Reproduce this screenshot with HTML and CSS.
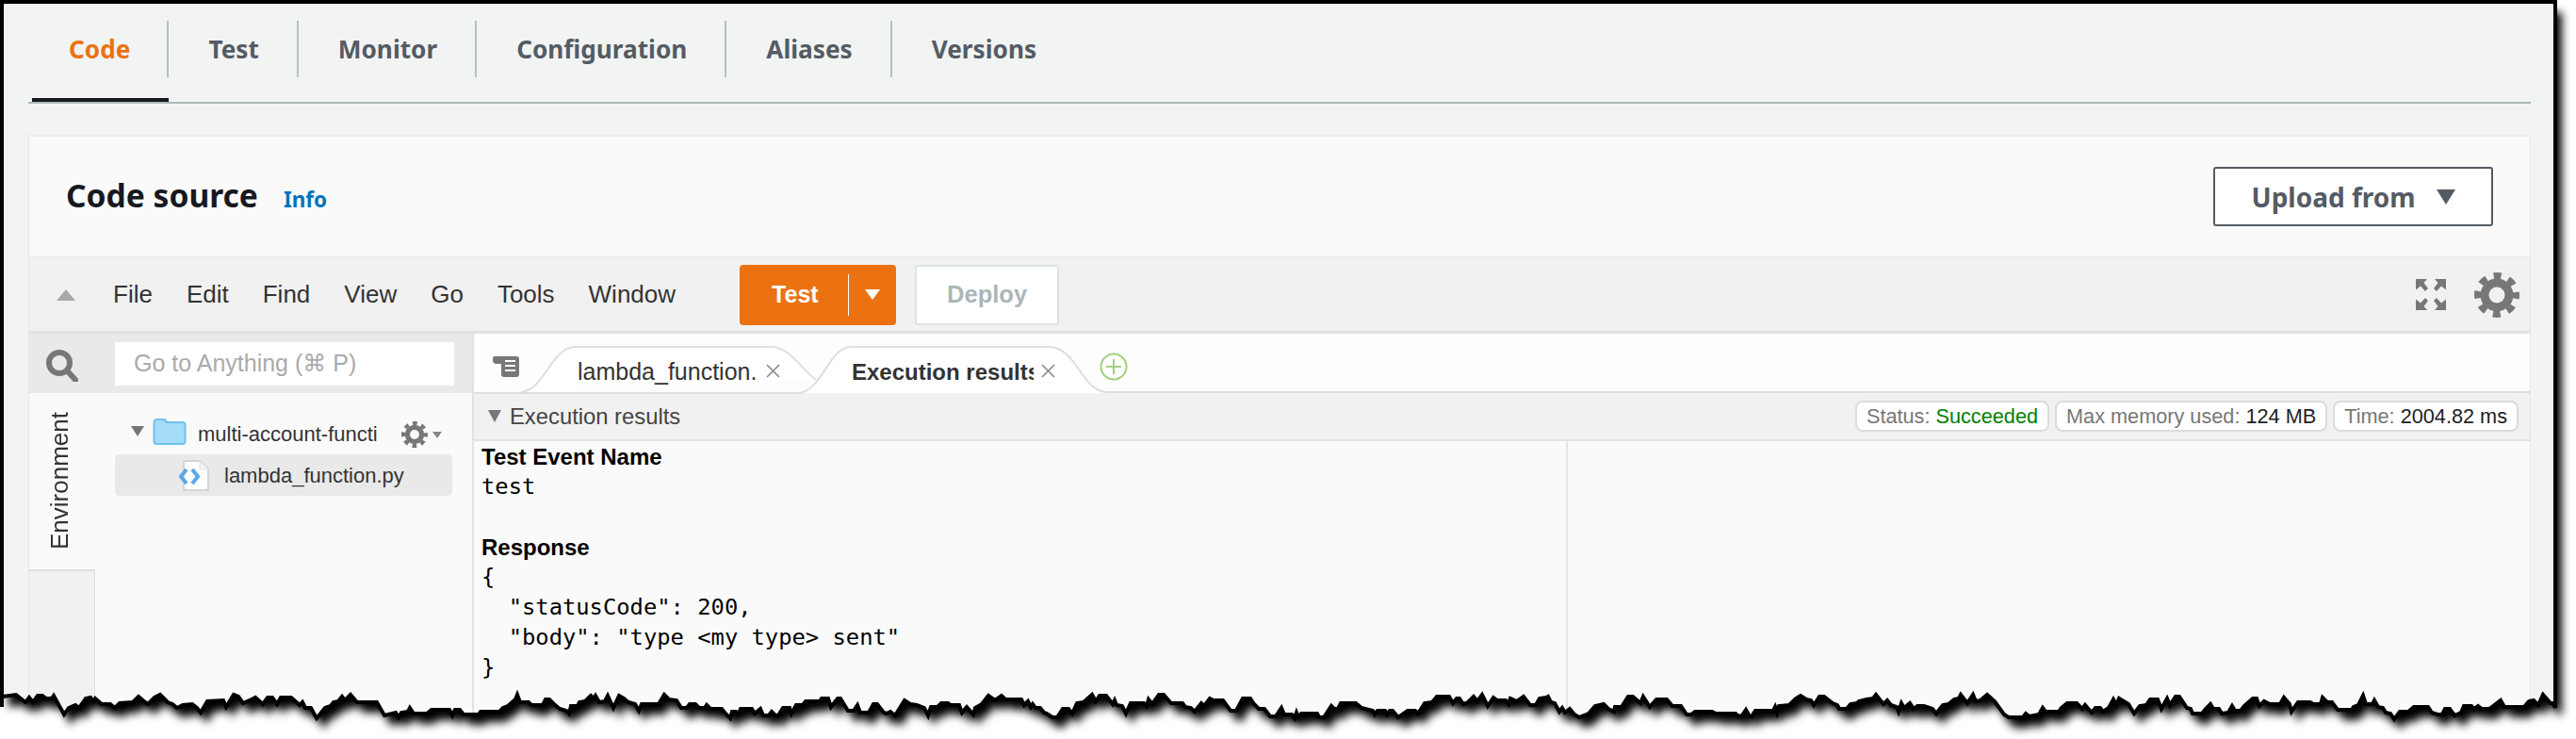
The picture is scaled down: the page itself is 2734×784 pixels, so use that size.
FILE: index.html
```html
<!DOCTYPE html>
<html lang="en">
<head>
<meta charset="utf-8">
<title>Code source</title>
<link rel="stylesheet" href="styles.css">
</head>
<body>
<svg class="defs" width="0" height="0" aria-hidden="true">
  <symbol id="gear" viewBox="-24 -24 48 48">
    <circle r="20.5" fill="none" stroke="currentColor" stroke-width="7" stroke-dasharray="8.05 8.05" stroke-dashoffset="4.02"/>
    <circle r="13" fill="none" stroke="currentColor" stroke-width="9"/>
  </symbol>
</svg>
<main class="page">
  <nav class="tabs">
    <a class="tab active"><span class="tab-label">Code</span></a>
    <a class="tab"><span class="tab-label">Test</span></a>
    <a class="tab"><span class="tab-label">Monitor</span></a>
    <a class="tab"><span class="tab-label">Configuration</span></a>
    <a class="tab"><span class="tab-label">Aliases</span></a>
    <a class="tab"><span class="tab-label last">Versions</span></a>
  </nav>
  <section class="card">
    <header class="card-head">
      <h2 class="card-title">Code source</h2>
      <a class="info">Info</a>
      <button class="upload">Upload from<span class="upload-caret"></span></button>
    </header>
    <div class="toolbar">
      <span class="collapse"></span>
      <ul class="menu">
        <li>File</li><li>Edit</li><li>Find</li><li>View</li><li>Go</li><li>Tools</li><li>Window</li>
      </ul>
      <div class="run">
        <span class="run-label">Test</span>
        <span class="run-div"></span>
        <span class="run-caret"></span>
      </div>
      <button class="deploy">Deploy</button>
      <svg class="expand" viewBox="0 0 32 33" aria-hidden="true">
        <g fill="#777">
          <path d="M0 0h12l-3.500 4 4.500 6-3 3-5-5.500-5 4z"/>
          <path d="M32 0h-12l3.500 4-4.500 6 3 3 5-5.500 5 4z"/>
          <path d="M0 33h12l-3.500-4 4.500-6-3-3-5 5.500-5-4z"/>
          <path d="M32 33h-12l3.500-4-4.500-6 3-3 5 5.500 5-4z"/>
        </g>
      </svg>
      <svg class="gear-lg" aria-hidden="true"><use href="#gear"/></svg>
    </div>
    <div class="ide">
      <aside class="side">
        <div class="search">
          <svg class="search-icon" viewBox="0 0 34 34" aria-hidden="true">
            <circle cx="14" cy="14" r="11" fill="none" stroke="#777" stroke-width="6"/>
            <path d="M22 22l9 10" stroke="#777" stroke-width="6" stroke-linecap="round"/>
          </svg>
          <div class="search-box">Go to Anything (⌘ P)</div>
        </div>
        <div class="side-body">
          <div class="env">
            <div class="env-tab"><span class="env-label">Environment</span></div>
            <div class="env-rest"></div>
          </div>
          <div class="tree">
            <div class="tree-folder">
              <span class="tree-tri"></span>
              <svg class="folder" viewBox="0 0 36 28" aria-hidden="true">
                <path d="M1.500 5V4a3 3 0 0 1 3-3h7a3 3 0 0 1 3 3h17a3 3 0 0 1 3 3v17a3 3 0 0 1-3 3h-27a3 3 0 0 1-3-3z" fill="#a5dcf7" stroke="#70c2ea" stroke-width="2"/>
              </svg>
              <span class="tree-name">multi-account-function</span>
              <svg class="gear-sm" aria-hidden="true"><use href="#gear"/></svg>
              <span class="gear-tri"></span>
            </div>
            <div class="tree-file">
              <svg class="file" viewBox="0 0 32 34" aria-hidden="true">
                <path d="M5 1h17l9 9v22H5z" fill="#fff" stroke="#d5d5d5" stroke-width="2"/>
                <path d="M22 1v9h9" fill="#f2f2f2" stroke="#e2e2e2" stroke-width="1"/>
                <path d="M8 10l-6 7.500 6 7.500M14 10l6 7.500-6 7.500" fill="none" stroke="#5aa7ea" stroke-width="4"/>
              </svg>
              <span>lambda_function.py</span>
            </div>
          </div>
        </div>
      </aside>
      <div class="editor">
        <div class="etabs">
          <svg class="etabs-shape" aria-hidden="true">
            <path d="M0 63H345" fill="none" stroke="#dedede" stroke-width="2"/>
            <path d="M50 62C75 60 82 14 108 14H315C335 14 345 35 363 49" fill="#fff" stroke="#dedede" stroke-width="2"/>
            <path d="M345 63C370 60 377 14 400 14H610C640 14 645 62 672 62H2184" fill="#fff" stroke="#dedede" stroke-width="2"/>
          </svg>
          <svg class="list-icon" viewBox="0 0 28 22" aria-hidden="true">
            <path d="M2 0h23a3 3 0 0 1 3 3v16a3 3 0 0 1-3 3H12a3 3 0 0 1-3-3V8H4a4 4 0 0 1-4-4V2a2 2 0 0 1 2-2z" fill="#777"/>
            <path d="M13 5h11M13 10h11M13 15h11" stroke="#fff" stroke-width="2"/>
          </svg>
          <span class="etab first">lambda_function.py</span>
          <svg class="close first-close" viewBox="0 0 15 15" aria-hidden="true"><path d="M1 1l13 13M14 1L1 14" stroke="#888" stroke-width="1.600"/></svg>
          <span class="etab second">Execution results</span>
          <svg class="close" viewBox="0 0 15 15" aria-hidden="true"><path d="M1 1l13 13M14 1L1 14" stroke="#888" stroke-width="1.600"/></svg>
          <svg class="plus" viewBox="0 0 30 30" aria-hidden="true">
            <circle cx="15" cy="15" r="13.500" fill="#fff" stroke="#a0d080" stroke-width="2"/>
            <path d="M15 7v16M7 15h16" stroke="#a0d080" stroke-width="2"/>
          </svg>
        </div>
        <div class="exec-bar">
          <span class="exec-tri"></span>
          <span class="exec-title">Execution results</span>
          <div class="pills">
            <span class="pill">Status: <b class="ok">Succeeded</b></span>
            <span class="pill">Max memory used: <b>124 MB</b></span>
            <span class="pill">Time: <b>2004.82 ms</b></span>
          </div>
        </div>
        <div class="panes">
          <div class="pane-left">
            <div class="out-head">Test Event Name</div>
            <pre class="out-code">test

</pre>
            <div class="out-head">Response</div>
            <pre class="out-code">{
  "statusCode": 200,
  "body": "type &lt;my type&gt; sent"
}</pre>
          </div>
        </div>
      </div>
    </div>
  </section>
</main>
<svg class="frame" viewBox="0 0 2734 784" aria-hidden="true">
  <defs>
    <path id="paper" d="M2 2V750V739L3 739 17 737 27 745 31 740 35 745 40 738 45 738 49 741 55 741 57 738 68 758 73 751 80 748 84 751 91 741 96 740 99 744 101 741 108 747 117 747 122 751 127 746 141 745 147 739 154 745 157 747 164 740 170 737 178 745 183 747 188 751 194 748 204 747 209 751 213 756 220 744 237 743 240 750 248 737 253 739 258 746 267 742 271 740 279 747 284 740 289 740 294 747 298 740 309 740 318 748 321 745 324 751 330 751 336 762 345 751 351 749 354 745 359 744 363 739 366 743 372 737 379 745 400 745 408 759 420 756 423 761 426 756 433 755 435 751 439 757 453 757 458 753 477 753 480 759 483 753 488 753 492 758 508 758 510 755 530 755 534 751 539 749 547 742 549 737 552 745 561 745 564 748 576 748 579 742 583 742 588 747 594 752 601 754 604 757 606 749 613 749 615 745 621 744 627 738 630 741 632 738 636 745 642 744 645 738 651 751 657 738 662 741 667 745 674 747 678 754 681 747 699 747 705 737 710 742 718 743 723 751 729 751 732 747 738 747 742 751 748 751 750 748 754 752 766 752 770 757 775 762 777 755 781 755 784 757 786 752 798 752 801 757 807 752 810 759 816 759 819 755 823 759 826 759 831 751 838 751 840 757 845 748 852 748 855 744 870 744 872 741 879 741 882 750 889 741 892 741 900 754 906 754 910 748 913 756 922 756 927 747 931 747 938 756 941 757 945 755 950 759 960 743 966 747 973 748 981 751 985 759 988 750 995 750 999 746 1006 746 1009 748 1018 748 1021 756 1026 750 1033 758 1035 751 1042 747 1049 738 1056 743 1063 738 1067 742 1084 742 1087 748 1091 744 1094 750 1096 747 1099 751 1104 751 1108 756 1111 757 1117 761 1122 761 1128 752 1134 752 1138 757 1143 746 1150 745 1159 737 1163 744 1167 738 1174 738 1181 747 1183 743 1185 748 1191 749 1195 757 1200 746 1214 746 1217 749 1219 742 1223 747 1230 737 1235 737 1243 746 1255 746 1258 750 1264 751 1268 755 1275 746 1278 749 1284 741 1288 743 1298 743 1306 754 1312 754 1319 741 1327 741 1331 747 1336 752 1342 752 1348 760 1354 760 1360 751 1363 758 1371 758 1374 762 1376 756 1378 761 1381 757 1398 757 1400 761 1405 761 1413 749 1416 752 1420 752 1423 746 1439 746 1445 751 1457 754 1459 758 1462 754 1470 754 1472 758 1475 754 1478 754 1484 761 1494 754 1502 754 1505 757 1512 746 1520 745 1525 739 1538 739 1542 746 1546 741 1549 741 1553 747 1558 745 1564 739 1568 744 1573 737 1579 749 1585 740 1589 743 1598 743 1601 747 1603 741 1610 744 1617 739 1624 748 1630 748 1634 741 1641 740 1643 739 1646 745 1650 746 1655 755 1658 751 1661 756 1666 752 1671 758 1676 761 1686 757 1693 749 1702 747 1707 752 1713 755 1714 750 1721 750 1728 739 1733 739 1741 746 1744 739 1751 750 1758 742 1769 742 1775 749 1784 749 1790 758 1795 758 1799 755 1817 755 1821 757 1842 757 1845 760 1849 759 1853 753 1857 760 1859 760 1863 754 1882 754 1884 750 1886 756 1888 749 1899 748 1906 741 1911 738 1917 742 1922 743 1925 748 1931 739 1936 739 1945 746 1950 748 1952 752 1960 752 1964 747 1971 746 1973 744 1981 742 1988 741 1991 737 1999 747 2003 743 2007 748 2013 750 2015 755 2018 746 2021 751 2027 746 2031 752 2035 749 2042 749 2051 752 2055 757 2062 748 2068 747 2074 742 2079 741 2081 737 2088 746 2094 737 2097 744 2102 743 2109 737 2117 744 2127 758 2132 761 2147 761 2150 757 2154 760 2164 758 2168 751 2171 755 2185 755 2188 751 2194 746 2204 746 2210 752 2213 748 2220 756 2224 751 2229 751 2232 755 2238 751 2243 742 2246 748 2249 741 2259 747 2265 757 2271 749 2278 748 2282 742 2290 742 2294 752 2300 741 2303 748 2309 739 2313 739 2321 751 2325 752 2327 757 2337 757 2341 752 2346 747 2349 752 2355 752 2358 757 2365 756 2369 749 2372 754 2378 754 2382 749 2391 741 2395 741 2398 749 2403 744 2409 747 2420 747 2424 740 2430 747 2432 755 2439 745 2452 745 2455 747 2463 747 2465 740 2470 745 2475 745 2481 753 2496 753 2498 750 2503 748 2508 738 2511 747 2518 747 2520 743 2524 750 2529 751 2532 756 2537 757 2541 763 2547 755 2556 755 2562 750 2577 750 2581 756 2587 758 2592 758 2595 752 2600 752 2605 759 2612 756 2615 749 2623 749 2626 752 2630 749 2634 752 2642 752 2646 749 2654 743 2658 750 2679 750 2684 744 2689 743 2694 748 2699 737 2707 746 2710 746 2712 751V2Z"/>
    <mask id="outside" maskUnits="userSpaceOnUse" x="0" y="0" width="2734" height="784">
      <rect width="2734" height="784" fill="#fff"/>
      <use href="#paper" fill="#000"/>
    </mask>
    <filter id="soft" filterUnits="userSpaceOnUse" x="-60" y="-60" width="2860" height="910">
      <feGaussianBlur stdDeviation="5"/>
    </filter>
  </defs>
  <g mask="url(#outside)">
    <rect width="2734" height="784" fill="#fff"/>
    <use href="#paper" transform="translate(7 11)" fill="#000" filter="url(#soft)"/>
  </g>
  <use href="#paper" fill="none" stroke="#000" stroke-width="4"/>
</svg>
</body>
</html>
```

FILE: styles.css
```css
* { box-sizing: border-box; }
html, body { margin: 0; padding: 0; }
body {
  width: 2734px;
  height: 784px;
  overflow: hidden;
  position: relative;
  background: #f2f4f3;
  font-family: "Liberation Sans", "DejaVu Sans", sans-serif;
}
.defs { position: absolute; }
.page { height: 784px; padding: 0 48px 0 30px; overflow: hidden; }

.tabs {
  display: flex;
  padding: 22px 0 0 4px;
  border-bottom: 2px solid #a9b8b8;
  font-family: "Noto Sans", sans-serif;
  font-size: 26.200px;
  font-weight: 700;
  color: #545b64;
}
.tab { padding-bottom: 22px; border-bottom: 4px solid transparent; }
.tab.active { border-bottom-color: #16191f; color: #ec7211; }
.tab-label {
  display: flex;
  align-items: center;
  height: 60px;
  padding: 0 40px 0 42px;
  border-right: 2px solid #b4c0c0;
}
.tab.active .tab-label { padding: 0 39px; }
.tab-label.last { border-right: 0; }

.card {
  margin-top: 33px;
  height: 640px;
  background: #fafafa;
  border-top: 2px solid #eaeded;
  border-left: 1px solid #e4e7e7;
  border-right: 1px solid #e4e7e7;
}
.card-head {
  display: flex;
  align-items: center;
  height: 127px;
  padding: 0 39px;
  font-family: "Noto Sans", sans-serif;
}
.card-title { margin: 0 0 3px; font-size: 33.600px; font-weight: 700; color: #16191f; }
.info { margin: 6px 0 0 27px; font-size: 22.500px; font-weight: 700; color: #0073bb; }
.upload {
  margin-left: auto;
  display: flex;
  align-items: center;
  justify-content: center;
  width: 297px;
  height: 63px;
  padding: 0;
  background: #fff;
  border: 2px solid #545b64;
  border-radius: 3px;
  color: #545b64;
  font: 700 28px "Noto Sans", sans-serif;
}
.upload-caret {
  margin-left: 22px;
  border-left: 10px solid transparent;
  border-right: 10px solid transparent;
  border-top: 16px solid #545b64;
}

.toolbar {
  display: flex;
  align-items: center;
  height: 82px;
  padding: 0 11px 0 29px;
  background: #f1f1f1;
  border-top: 2px solid #eaeded;
  border-bottom: 3px solid #e1e1e1;
}
.collapse {
  border-left: 10px solid transparent;
  border-right: 10px solid transparent;
  border-bottom: 12px solid #a8a8a8;
}
.menu {
  display: flex;
  gap: 36px;
  margin: 0 0 0 40px;
  padding: 0;
  list-style: none;
  font-size: 26px;
  color: #333;
}
.run {
  display: flex;
  align-items: center;
  width: 166px;
  height: 64px;
  margin-left: 68px;
  padding-left: 34px;
  background: #ec7211;
  border-radius: 4px;
  color: #fff;
  font-size: 25px;
  font-weight: 700;
}
.run-div { width: 1px; height: 44px; margin-left: 31px; background: #fff; }
.run-caret {
  margin-left: 17px;
  border-left: 8px solid transparent;
  border-right: 8px solid transparent;
  border-top: 11px solid #fff;
}
.deploy {
  width: 153px;
  height: 64px;
  margin-left: 20px;
  background: #fff;
  border: 2px solid #dde3e3;
  border-radius: 3px;
  color: #aab7b8;
  font: 700 25.500px "Liberation Sans", sans-serif;
}
.expand { width: 32px; height: 33px; margin-left: auto; }
.gear-lg { width: 48px; height: 48px; margin-left: 30px; color: #777; }

.ide { display: flex; height: 429px; }
.side { width: 470px; flex: none; display: flex; flex-direction: column; }
.search {
  display: flex;
  align-items: center;
  height: 63px;
  padding-left: 18px;
  background: #e9e9e9;
}
.search-icon { width: 34px; height: 34px; margin-top: 4px; }
.search-box {
  display: flex;
  align-items: center;
  width: 360px;
  height: 46px;
  margin-left: 39px;
  padding-left: 20px;
  background: #fff;
  color: #aaa;
  font-size: 25px;
}
.side-body { display: flex; flex: 1; }
.env { width: 70px; flex: none; display: flex; flex-direction: column; }
.env-tab { height: 187px; padding: 20px 0 0 17px; }
.env-label {
  display: block;
  writing-mode: vertical-rl;
  transform: rotate(180deg);
  font-size: 26px;
  color: #333;
}
.env-rest {
  flex: 1;
  background: #f1f1f1;
  border-top: 2px solid #dedede;
  border-right: 1px solid #dedede;
}
.tree { flex: 1; padding: 23px 0 0 21px; color: #333; font-size: 22px; }
.tree-folder { display: flex; align-items: center; height: 42px; padding-left: 17px; }
.tree-tri {
  margin-bottom: 8px;
  border-left: 7px solid transparent;
  border-right: 7px solid transparent;
  border-top: 11px solid #777;
}
.folder { width: 36px; height: 28px; margin-left: 9px; flex: none; margin-bottom: 6px; }
.tree-name { width: 190px; margin-left: 12px; overflow: hidden; white-space: nowrap; }
.gear-sm { width: 28px; height: 28px; margin-left: 26px; color: #777; }
.gear-tri {
  margin-left: 5px;
  border-left: 5px solid transparent;
  border-right: 5px solid transparent;
  border-top: 7px solid #888;
}
.tree-file {
  display: flex;
  align-items: center;
  width: 358px;
  height: 44px;
  padding: 2px 0 0 68px;
  background: #e9e9e9;
  border-radius: 5px;
}
.file { width: 32px; height: 34px; margin-right: 16px; }

.editor { flex: 1; min-width: 0; border-left: 2px solid #e2e2e2; }
.etabs {
  position: relative;
  display: flex;
  align-items: center;
  height: 63px;
  padding: 18px 0 0 20px;
  background: #fdfdfd;
  font-size: 25px;
  color: #333;
}
.etabs-shape { position: absolute; left: 0; top: 0; width: 100%; height: 64px; }
.list-icon { position: relative; width: 28px; height: 22px; margin-bottom: 11px; }
.etab { position: relative; overflow: hidden; white-space: nowrap; }
.etab.first { width: 191px; margin-left: 62px; }
.etab.second { width: 193px; margin-left: 76px; font-size: 24px; font-weight: 700; }
.close { position: relative; width: 15px; height: 15px; margin-left: 8px; margin-bottom: 3px; }
.close.first-close { margin-left: 9px; }
.plus { position: relative; width: 30px; height: 30px; margin-left: 47px; margin-bottom: 12px; }

.exec-bar {
  display: flex;
  align-items: center;
  height: 51px;
  padding: 0 12px 0 15px;
  background: #f1f1f1;
  border-bottom: 2px solid #e2e2e2;
  font-size: 23.800px;
  color: #444;
}
.exec-tri {
  border-left: 7px solid transparent;
  border-right: 7px solid transparent;
  border-top: 13px solid #777;
}
.exec-title { margin-left: 9px; }
.pills { display: flex; gap: 6px; margin-left: auto; }
.pill {
  display: flex;
  align-items: center;
  height: 33px;
  padding: 0 10px;
  background: #fff;
  border: 2px solid #dcdcdc;
  border-radius: 8px;
  font-size: 21.700px;
  color: #777;
  white-space: pre;
}
.pill b { font-weight: 400; color: #222; }
.pill b.ok { color: #008000; }

.pane-left {
  width: 1161px;
  height: 320px;
  padding-left: 8px;
  border-right: 2px solid #e5e5e5;
  color: #000;
}
.out-head { padding-top: 2px; font-size: 24px; font-weight: 700; line-height: 30px; }
.out-code {
  margin: 0;
  font: 23.800px/32px "DejaVu Sans Mono", monospace;
}

.frame { position: absolute; left: 0; top: 0; width: 2734px; height: 784px; pointer-events: none; }
```
